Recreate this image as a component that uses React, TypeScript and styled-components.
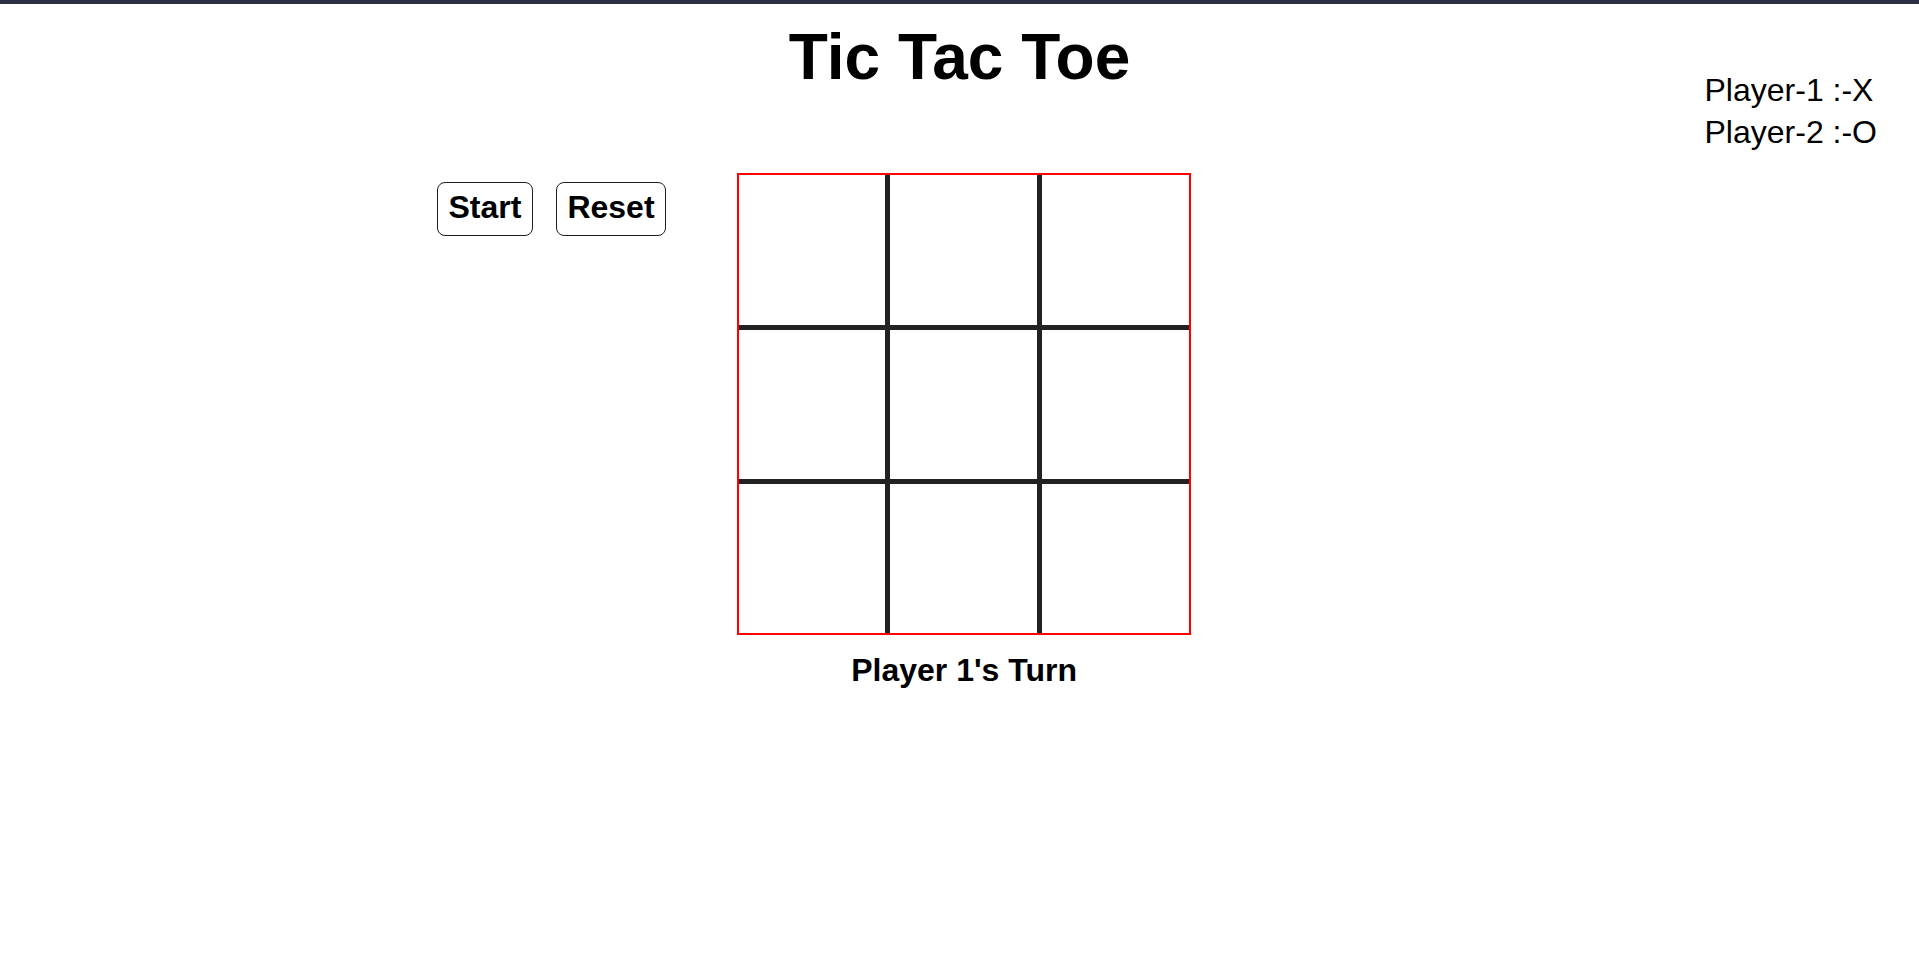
import React from "react";
import styled, { createGlobalStyle } from "styled-components";

const GlobalStyle = createGlobalStyle`
  html, body {
    margin: 0;
    padding: 0;
    background: #ffffff;
  }
  body {
    font-family: "Liberation Sans", Arial, Helvetica, sans-serif;
    color: #000000;
  }
`;

const Page = styled.div`
  display: flex;
  flex-direction: column;
  min-height: 100vh;
`;

const TopBar = styled.div`
  height: 4px;
  background: #2c2e43;
`;

const Header = styled.header`
  display: grid;
  grid-template-columns: 1fr auto 1fr;
  padding-top: 16px;
`;

const Title = styled.h1`
  grid-column: 2;
  margin: 0;
  font-size: 64px;
  font-weight: 700;
  line-height: normal;
`;

const Players = styled.div`
  grid-column: 3;
  justify-self: end;
  margin: 49px 42px 0 0;
  font-size: 32px;
  line-height: 42px;
`;

const PlayerLine = styled.div``;

const Main = styled.main`
  display: flex;
  align-items: flex-start;
  gap: 71px;
  margin-top: 20px;
  padding-left: 437px;
`;

const Controls = styled.div`
  display: flex;
  gap: 23px;
  margin-top: 9px;
`;

const ControlButton = styled.button`
  font-family: "Liberation Sans", Arial, Helvetica, sans-serif;
  font-size: 32px;
  font-weight: 700;
  line-height: normal;
  color: #000000;
  background: #ffffff;
  border: 1px solid #1e1e1e;
  border-radius: 8px;
  padding: 6px 10.5px 9px;
  cursor: pointer;
`;

const BoardColumn = styled.section`
  display: flex;
  flex-direction: column;
  align-items: center;
  gap: 17px;
`;

const Board = styled.div`
  display: grid;
  grid-template-columns: 146px 147px 147px;
  grid-template-rows: 150px 149px 149px;
  gap: 5px;
  border: 2px solid #ff0000;
  background: #222222;
`;

const Cell = styled.div`
  background: #ffffff;
`;

const Turn = styled.div`
  font-size: 32px;
  font-weight: 700;
  line-height: normal;
`;

export default function App() {
  const cells = Array.from({ length: 9 }, (_, i) => i);
  return (
    <Page>
      <GlobalStyle />
      <TopBar />
      <Header>
        <Title>Tic Tac Toe</Title>
        <Players>
          <PlayerLine>Player-1 :-X</PlayerLine>
          <PlayerLine>Player-2 :-O</PlayerLine>
        </Players>
      </Header>
      <Main>
        <Controls>
          <ControlButton>Start</ControlButton>
          <ControlButton>Reset</ControlButton>
        </Controls>
        <BoardColumn>
          <Board>
            {cells.map((i) => (
              <Cell key={i} />
            ))}
          </Board>
          <Turn>Player 1's Turn</Turn>
        </BoardColumn>
      </Main>
    </Page>
  );
}
